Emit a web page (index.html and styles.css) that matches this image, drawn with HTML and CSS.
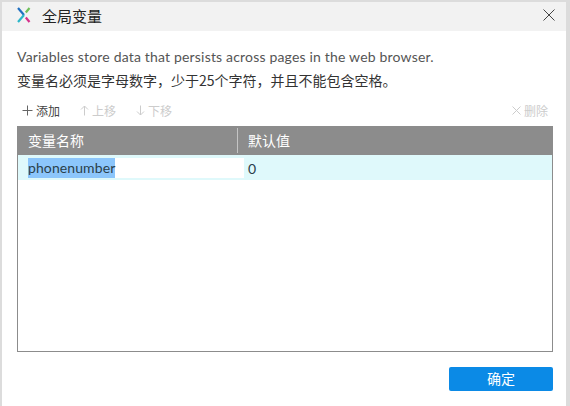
FILE: index.html
```html
<!DOCTYPE html>
<html lang="zh-CN">
<head>
<meta charset="utf-8">
<title>全局变量</title>
<link rel="stylesheet" href="styles.css">
</head>
<body>
<div class="dialog">
  <header class="titlebar">
    <svg class="logo" width="14" height="16" viewBox="0 0 14 16" fill="none" stroke-width="2.2">
      <path d="M1 1 L7 8" stroke="#1f6fc0"/>
      <path d="M7 8 L1 15" stroke="#2bb6c9"/>
      <path d="M12.5 1 L8.8 5.5" stroke="#6fc05a"/>
      <path d="M8.8 10.5 L12.5 15" stroke="#d6308c"/>
    </svg>
    <span class="title">全局变量</span>
    <svg class="close" width="12" height="12" viewBox="0 0 12 12" fill="none" stroke="#444" stroke-width="1">
      <path d="M0.5 0.5 L11.5 11.5 M11.5 0.5 L0.5 11.5"/>
    </svg>
  </header>
  <main class="body">
    <p class="desc en">Variables store data that persists across pages in the web browser.</p>
    <p class="desc cn">变量名必须是字母数字，少于25个字符，并且不能包含空格。</p>
    <div class="toolbar">
      <span class="tool active"><svg width="11" height="11" viewBox="0 0 11 11" stroke="#666" fill="none"><path d="M5.5 0.5V10.5M0.5 5.5H10.5"/></svg>添加</span>
      <span class="tool"><svg width="9" height="11" viewBox="0 0 9 11" stroke="#ccc" fill="none"><path d="M4.5 10.5V1M1 4.5L4.5 1L8 4.5"/></svg>上移</span>
      <span class="tool"><svg width="9" height="11" viewBox="0 0 9 11" stroke="#ccc" fill="none"><path d="M4.5 0.5V10M1 6.5L4.5 10L8 6.5"/></svg>下移</span>
      <span class="tool right"><svg width="9" height="9" viewBox="0 0 9 9" stroke="#ccc" fill="none"><path d="M0.5 0.5L8.5 8.5M8.5 0.5L0.5 8.5"/></svg>删除</span>
    </div>
    <div class="table">
      <div class="thead">
        <div class="th name">变量名称</div>
        <div class="th value">默认值</div>
      </div>
      <div class="row">
        <div class="cell-input"><span class="selected">phonenumber</span></div>
        <div class="cell-value">0</div>
      </div>
    </div>
    <div class="footer"><button class="ok">确定</button></div>
  </main>
</div>
</body>
</html>
```
FILE: styles.css
```css
* { box-sizing: border-box; }
html, body { margin: 0; height: 100%; }
body {
  background: #fff;
  font-family: "Lato", "Noto Sans CJK SC", sans-serif;
  overflow: hidden;
}
.dialog {
  width: 570px;
  height: 406px;
  border-top: 2px solid #dcdcdc;
  border-left: 2px solid #dcdcdc;
  border-right: 4px solid #dcdcdc;
  display: flex;
  flex-direction: column;
  background: #fff;
}
.titlebar {
  height: 29px;
  flex: none;
  background: #f2f2f2;
  display: flex;
  align-items: center;
  padding: 0 11px 3px 15px;
}
.logo { flex: none; }
.title {
  margin-left: 11px;
  font: 15px "Noto Sans CJK SC", sans-serif;
  color: #222;
}
.close { margin-left: auto; }
.body {
  flex: 1;
  display: flex;
  flex-direction: column;
  padding: 0 13px 13px 15px;
}
.desc { margin: 0; color: #444; white-space: nowrap; }
.en { margin-top: 17px; line-height: 18px; font-size: 14px; letter-spacing: 0.18px; color: #555; }
.cn { margin-top: 5px; line-height: 18px; font-size: 14px; font-family: "Noto Sans CJK SC", sans-serif; color: #333; }
.toolbar {
  display: flex;
  align-items: center;
  height: 18px;
  margin-top: 12px;
  padding: 0 5px;
  gap: 20px;
  font: 12px "Noto Sans CJK SC", sans-serif;
}
.tool { display: inline-flex; align-items: center; gap: 3px; color: #ccc; }
.tool.active { color: #444; }
.right { margin-left: auto; }
.table {
  height: 226px;
  margin-top: 7px;
  border: 1px solid #8c8c8c;
  border-top: 0;
  flex: none;
}
.thead {
  height: 29px;
  background: #8c8c8c;
  display: flex;
  align-items: center;
  color: #fff;
  font: 14px/20px "Noto Sans CJK SC", sans-serif;
}
.th { height: 100%; display: flex; align-items: center; padding: 0 0 2px 10px; }
.name { width: 220px; border-right: 1px solid #c4c4c4; height: 25px; }
.row {
  height: 25px;
  background: #dff9fb;
  display: flex;
  align-items: center;
  font-size: 14px;
  color: #2a3f4a;
}
.cell-input {
  width: 216px;
  height: 20px;
  margin-top: 1px;
  margin-left: 10px;
  background: #fff;
  line-height: 20px;
}
.selected { display: inline-block; background: #8cc6fb; letter-spacing: 0.1px; }
.cell-value { margin-left: 4px; margin-top: 1px; }
.footer { display: flex; justify-content: flex-end; margin-top: 15px; }
.ok {
  width: 104px;
  height: 24px;
  border: 0;
  border-radius: 2px;
  background: #0b8ae6;
  color: #fff;
  font: 14px "Noto Sans CJK SC", sans-serif;
  padding: 0 0 2px;
}
```
